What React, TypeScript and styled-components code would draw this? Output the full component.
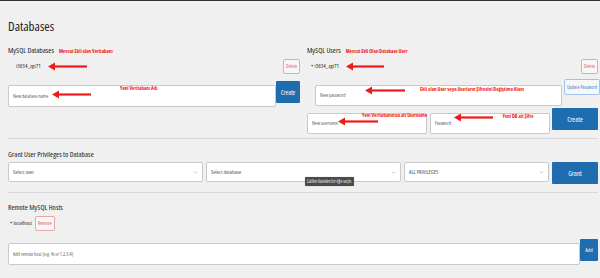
import React from 'react';
import styled, { createGlobalStyle } from 'styled-components';
import { ChevronDown } from 'lucide-react';

const GlobalStyle = createGlobalStyle`
  body {
    margin: 0;
    background: #f0f0f0;
    font-family: "Open Sans", "Roboto Condensed", sans-serif;
    font-stretch: 75%;
    color: #333;
  }
  button, input {
    font-family: inherit;
    font-stretch: inherit;
  }
`;

const Page = styled.div`
  border-top: 1px solid #333;
  padding: 15px 2px 16px 8px;
`;

const Title = styled.h1`
  margin: 0;
  font-size: 13px;
  line-height: 20px;
  font-weight: 400;
  color: #222;
`;

const Columns = styled.div`
  display: grid;
  grid-template-columns: 292px 1fr;
  column-gap: 7px;
  margin-top: 8px;
`;

const Column = styled.div`
  display: flex;
  flex-direction: column;
`;

const SectionHead = styled.div<{ $top?: number }>`
  display: flex;
  align-items: baseline;
  gap: 5px;
  height: 12px;
  line-height: 12px;
  margin-top: ${(p) => p.$top ?? 0}px;
`;

const SectionTitle = styled.h2`
  margin: 0;
  font-size: 7.5px;
  font-weight: 500;
  color: #222;
`;

const Note = styled.span`
  color: #f01515;
  font-size: 5.1px;
  font-weight: 700;
  white-space: nowrap;
`;

const ItemRow = styled.div<{ $indent: number }>`
  display: flex;
  align-items: center;
  gap: 7px;
  height: 16px;
  margin-top: 2px;
  padding-left: ${(p) => p.$indent}px;
`;

const ItemName = styled.span<{ $bullet?: boolean }>`
  font-size: 6px;
  color: #333;
  &::before {
    content: ${(p) => (p.$bullet ? "'•\\00a0'" : "''")};
  }
`;

const Spacer = styled.div`
  flex: 1;
`;

const OutlineButton = styled.button<{ $tone: 'danger' | 'info' }>`
  font-size: 5px;
  height: 15px;
  padding: 0 2px;
  border-radius: 2px;
  background: #f7f7f7;
  cursor: pointer;
  border: 1px solid ${(p) => (p.$tone === 'danger' ? '#e9a7ad' : '#9fc3ef')};
  color: ${(p) => (p.$tone === 'danger' ? '#e0606b' : '#3d7fd6')};
`;

const PrimaryButton = styled.button<{ $w: number; $size?: number }>`
  font-size: ${(p) => p.$size ?? 7}px;
  width: ${(p) => p.$w}px;
  height: 22px;
  flex: none;
  padding: 0;
  border: none;
  border-radius: 1px;
  background: #1f6cae;
  color: #fff;
  cursor: pointer;
`;

const FormRow = styled.div<{ $top: number; $indent?: number; $gap?: number }>`
  display: flex;
  align-items: flex-start;
  gap: ${(p) => p.$gap ?? 0}px;
  margin-top: ${(p) => p.$top}px;
  padding-left: ${(p) => p.$indent ?? 0}px;
`;

const FieldWrap = styled.div<{ $h?: number; $mt?: number }>`
  position: relative;
  flex: 1;
  height: ${(p) => p.$h ?? 22}px;
  margin-top: ${(p) => p.$mt ?? 0}px;
`;

const Input = styled.input`
  box-sizing: border-box;
  width: 100%;
  height: 100%;
  border: 1px solid #c9c9c9;
  border-radius: 2px;
  background: #fff;
  padding: 0 4px;
  font-size: 5px;
  outline: none;
  &::placeholder {
    color: #666;
  }
`;

const Overlay = styled.div<{ $left: number; $top: number }>`
  position: absolute;
  left: ${(p) => p.$left}px;
  top: ${(p) => p.$top}px;
  display: flex;
  align-items: center;
  pointer-events: none;
`;

const Divider = styled.hr<{ $top: number }>`
  border: none;
  border-top: 1px solid #d9d9d9;
  margin: ${(p) => p.$top}px 0 0;
`;

const SelectBox = styled.div<{ $w: number }>`
  position: relative;
  box-sizing: border-box;
  width: ${(p) => p.$w}px;
  height: 20px;
  flex: none;
  display: flex;
  align-items: center;
  justify-content: space-between;
  padding: 0 4px;
  background: #fff;
  border: 1px solid #c9c9c9;
  border-radius: 2px;
  font-size: 5.6px;
  color: #555;
`;

const Tooltip = styled.div`
  position: absolute;
  left: 98px;
  top: 14px;
  padding: 2px 2px;
  background: #4a4a4a;
  color: #eee;
  font-size: 4.6px;
  line-height: 5px;
  white-space: nowrap;
  border-radius: 1px;
  box-shadow: 0 0 1px rgba(0, 0, 0, 0.4);
`;

const Arrow: React.FC<{ w: number }> = ({ w }) => (
  <svg width={w} height={9} viewBox={`0 0 ${w} 9`}>
    <path d="M0 4.5 L7 0.5 L7 8.5 Z" fill="#ee1b1b" />
    <rect x={6} y={3.4} width={w - 6} height={2.2} fill="#ee1b1b" />
  </svg>
);

const App: React.FC = () => {
  return (
    <>
      <GlobalStyle />
      <Page>
        <Title>Databases</Title>
        <Columns>
          <Column>
            <SectionHead>
              <SectionTitle>MySQL Databases</SectionTitle>
              <Note>Mevcut Ekli olan Veritabanı</Note>
            </SectionHead>
            <ItemRow $indent={8}>
              <ItemName>i3634_zgt71</ItemName>
              <Arrow w={39} />
              <Spacer />
              <OutlineButton $tone="danger">Delete</OutlineButton>
            </ItemRow>
            <FormRow $top={7}>
              <FieldWrap>
                <Input placeholder="New database name" />
                <Overlay $left={44} $top={9}>
                  <Arrow w={39} />
                </Overlay>
                <Overlay $left={112} $top={4}>
                  <Note>Yeni Veritabanı Adı</Note>
                </Overlay>
              </FieldWrap>
              <PrimaryButton $w={24} $size={6.5}>
                Create
              </PrimaryButton>
            </FormRow>
          </Column>

          <Column>
            <SectionHead>
              <SectionTitle>MySQL Users</SectionTitle>
              <Note>Mevcut Ekli Olan Database User</Note>
            </SectionHead>
            <ItemRow $indent={4}>
              <ItemName $bullet>i3634_zgt71</ItemName>
              <Arrow w={38} />
              <Spacer />
              <OutlineButton $tone="danger">Delete</OutlineButton>
            </ItemRow>
            <FormRow $top={5} $indent={8} $gap={2}>
              <FieldWrap $h={21} $mt={1}>
                <Input placeholder="New password" />
                <Overlay $left={50} $top={6}>
                  <Arrow w={40} />
                </Overlay>
                <Overlay $left={105} $top={6}>
                  <Note>Ekli olan User veya Userların Şifresini Değiştime Alanı</Note>
                </Overlay>
              </FieldWrap>
              <OutlineButton $tone="info" style={{ height: 16, marginRight: -2 }}>
                Update Password
              </OutlineButton>
            </FormRow>
            <FormRow $top={7} $gap={2.5}>
              <FieldWrap $h={21}>
                <Input placeholder="New username" />
                <Overlay $left={31} $top={9}>
                  <Arrow w={40} />
                </Overlay>
                <Overlay $left={55} $top={4}>
                  <Note>Yeni Veritabanınıza ait Username</Note>
                </Overlay>
              </FieldWrap>
              <FieldWrap $h={21}>
                <Input placeholder="Password" />
                <Overlay $left={24} $top={5}>
                  <Arrow w={39} />
                </Overlay>
                <Overlay $left={73} $top={5}>
                  <Note>Yeni DB ait Şifre</Note>
                </Overlay>
              </FieldWrap>
              <PrimaryButton $w={46}>Create</PrimaryButton>
            </FormRow>
          </Column>
        </Columns>

        <Divider $top={8} />

        <SectionHead $top={9}>
          <SectionTitle>Grant User Privileges to Database</SectionTitle>
        </SectionHead>
        <FormRow $top={2} $gap={3}>
          <SelectBox $w={195}>
            Select user
            <ChevronDown size={5} color="#777" />
          </SelectBox>
          <SelectBox $w={195}>
            Select database
            <ChevronDown size={5} color="#777" />
            <Tooltip>Lütfen listeden bir öğe seçin.</Tooltip>
          </SelectBox>
          <SelectBox $w={145}>
            ALL PRIVILEGES
            <ChevronDown size={5} color="#777" />
          </SelectBox>
          <PrimaryButton $w={46}>Grant</PrimaryButton>
        </FormRow>

        <Divider $top={8} />

        <SectionHead $top={8}>
          <SectionTitle>Remote MySQL Hosts</SectionTitle>
        </SectionHead>
        <ItemRow $indent={2}>
          <ItemName $bullet>localhost</ItemName>
          <OutlineButton $tone="danger" style={{ marginLeft: -4 }}>
            Remove
          </OutlineButton>
        </ItemRow>
        <FormRow $top={8}>
          <FieldWrap>
            <Input placeholder="Add remote host (e.g. % or 1.2.3.4)" />
          </FieldWrap>
          <PrimaryButton $w={18} $size={5.5}>
            Add
          </PrimaryButton>
        </FormRow>
      </Page>
    </>
  );
};

export default App;
